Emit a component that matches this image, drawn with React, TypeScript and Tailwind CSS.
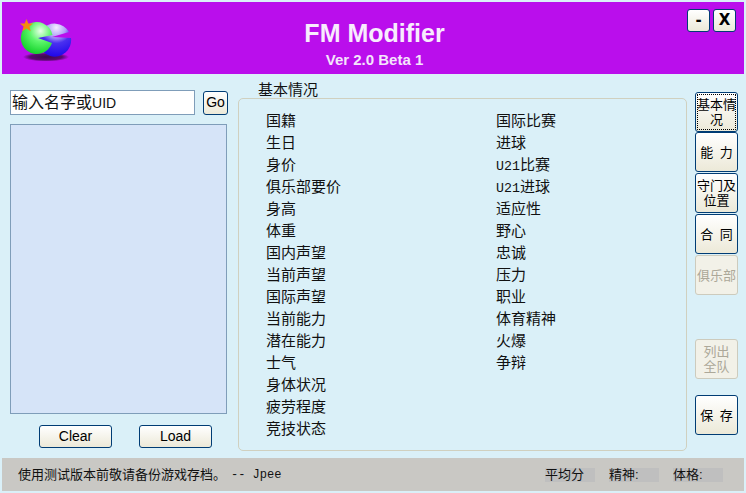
import React from "react";

const cjk = "font-['Liberation_Sans','Noto_Sans_CJK_SC',sans-serif]";
const mono = "font-['Liberation_Mono','Noto_Sans_CJK_SC',monospace]";

const col1 = ["国籍", "生日", "身价", "俱乐部要价", "身高", "体重", "国内声望", "当前声望", "国际声望", "当前能力", "潜在能力", "士气", "身体状况", "疲劳程度", "竞技状态"];
const col2 = ["国际比赛", "进球", "U21比赛", "U21进球", "适应性", "野心", "忠诚", "压力", "职业", "体育精神", "火爆", "争辩"];

const btn = "flex items-center justify-center rounded-[3px] border border-[#003c74] bg-gradient-to-b from-white to-[#ece9d8] text-black";
const btnOff = "flex items-center justify-center rounded-[3px] border border-[#cdcbbd] bg-[#f2f1e8] text-[#aca899]";

const Logo = () => (
  <svg width="60" height="50" viewBox="16 14 60 50">
    <defs>
      <radialGradient id="g" cx="0.62" cy="0.28" r="0.75">
        <stop offset="0" stopColor="#e8ffe8" />
        <stop offset="0.45" stopColor="#5cf56a" />
        <stop offset="1" stopColor="#10d028" />
      </radialGradient>
      <radialGradient id="b" cx="0.55" cy="0.12" r="0.95">
        <stop offset="0" stopColor="#f4eeff" />
        <stop offset="0.3" stopColor="#b0a0f8" />
        <stop offset="0.5" stopColor="#4a30f0" />
        <stop offset="1" stopColor="#1800e8" />
      </radialGradient>
      <radialGradient id="s">
        <stop offset="0" stopColor="#3a0a4c" />
        <stop offset="0.7" stopColor="#5a0a70" />
        <stop offset="1" stopColor="#b90eea" />
      </radialGradient>
    </defs>
    <ellipse cx="46" cy="57" rx="23" ry="4.5" fill="url(#s)" />
    <path d="M69 32A16.500 16.500 0 1 0 71 38L52 37Z" fill="url(#b)" />
    <path d="M52.500 35A16 16 0 1 0 52 43L38 38Z" fill="url(#g)" />
    <path d="M26.500 19l1.900 4.500h4.700l-3.700 3 1.300 4.800-4.200-2.700-4.200 2.700 1.300-4.800-3.700-3h4.700Z" fill="#f58a10" />
  </svg>
);

export default function App() {
  return (
    <div className={`w-[746px] h-[493px] bg-[#daf0f8] p-[2px] overflow-hidden flex flex-col ${cjk}`}>
      <div className="h-[72px] shrink-0 bg-[#ba0eec] grid grid-cols-[1fr_auto_1fr]">
        <div className="pl-[14px] pt-[12px]">
          <Logo />
        </div>
        <div className="flex flex-col items-center text-white font-bold pl-[3px]">
          <div className="text-[25px] leading-[30px] mt-[16px] text-[#f8ecfd]">FM Modifier</div>
          <div className="text-[15px] leading-[16px] mt-[4px] text-[#f4e4fb]">Ver 2.0 Beta 1</div>
        </div>
        <div className="flex justify-end gap-[3px] pr-[8px] pt-[7px] font-['DejaVu_Sans',sans-serif]">
          <button className={`${btn} w-[23px] h-[23px] text-[15px] font-bold leading-none`}>-</button>
          <button className={`${btn} w-[23px] h-[23px] text-[15px] font-bold leading-none`}>X</button>
        </div>
      </div>

      <div className="flex-1 flex min-h-0">
        <div className="w-[226px] ml-[8px] shrink-0 flex flex-col">
          <div className="flex items-center gap-[8px] mt-[16px]">
            <div className="w-[185px] h-[25px] bg-white border border-[#7f9db9] text-[16px] leading-[23px] pl-[1px] text-[#111]">
              输入名字或<span className="text-[14px]">UID</span>
            </div>
            <button className={`${btn} w-[25px] h-[24px] text-[14px]`}>Go</button>
          </div>
          <div className="w-[217px] h-[290px] mt-[9px] bg-[#d6e4f8] border border-[#7f9db9]" />
          <div className="flex gap-[27px] mt-[11px] ml-[29px]">
            <button className={`${btn} w-[73px] h-[23px] text-[14px]`}>Clear</button>
            <button className={`${btn} w-[73px] h-[23px] text-[14px]`}>Load</button>
          </div>
        </div>

        <div className="w-[449px] ml-[2px] shrink-0 mt-[7px]">
          <div className="ml-[20px] text-[15px] leading-[17px] text-[#111]">基本情况</div>
          <div className="w-[449px] h-[353px] border border-[#d0d0bf] rounded-[5px] grid grid-cols-[230px_1fr] pl-[27px] pt-[11px] text-[15px] leading-[22px] text-[#111]">
            <div>
              {col1.map((t) => (
                <div key={t}>{t}</div>
              ))}
            </div>
            <div>
              {col2.map((t) =>
                t.startsWith("U21") ? (
                  <div key={t} className="h-[22px]">
                    <span className={`${mono} text-[13.3px] leading-none`}>U21</span>
                    {t.slice(3)}
                  </div>
                ) : (
                  <div key={t}>{t}</div>
                )
              )}
            </div>
          </div>
        </div>

        <div className="ml-[8px] mt-[18px] w-[43px] flex flex-col text-[13px] leading-[15px] text-center">
          <button className={`${btn} h-[40px] outline-1 outline-dotted outline-black -outline-offset-3`}>基本情况</button>
          <button className={`${btn} h-[40px] [word-spacing:3px]`}>能 力</button>
          <button className={`${btn} h-[40px] mt-[1px]`}>守门及位置</button>
          <button className={`${btn} h-[40px] mt-[1px] [word-spacing:3px]`}>合 同</button>
          <button className={`${btnOff} h-[40px] mt-[1px]`}>俱乐部</button>
          <button className={`${btnOff} h-[40px] mt-[44px] px-[6px]`}>列出全队</button>
          <button className={`${btn} h-[40px] mt-[16px] [word-spacing:3px]`}>保 存</button>
        </div>
      </div>

      <div className="h-[33px] shrink-0 bg-[#c9c8c4] flex items-center text-[13px] text-[#111]">
        <div className="ml-[16px]">使用测试版本前敬请备份游戏存档。</div>
        <div className={`${mono} ml-[5px] text-[12px]`}>-- Jpee</div>
        <div className="ml-auto mr-[21px] flex gap-[14px]">
          <div className="w-[50px] h-[14px] bg-[#bfbfbf] leading-[14px]">平均分</div>
          <div className="w-[50px] h-[14px] bg-[#bfbfbf] leading-[14px]">精神:</div>
          <div className="w-[50px] h-[14px] bg-[#bfbfbf] leading-[14px]">体格:</div>
        </div>
      </div>
    </div>
  );
}
